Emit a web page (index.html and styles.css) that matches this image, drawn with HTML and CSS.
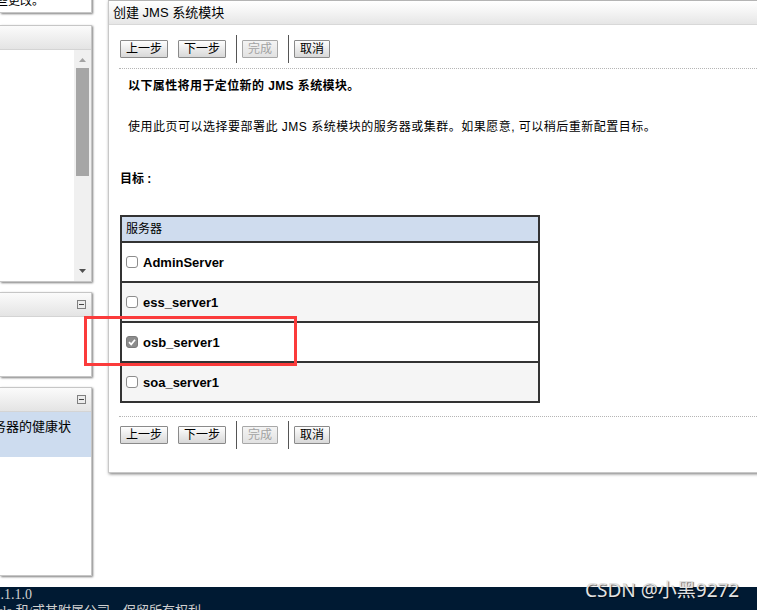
FILE: index.html
```html
<!DOCTYPE html>
<html lang="zh-CN">

<head>
  <meta charset="UTF-8">
  <meta name="viewport" content="width=device-width, initial-scale=1.0">
  <title>创建 JMS 系统模块</title>
  <link rel="stylesheet" href="styles.css">
</head>

<body>
  <div class="page">
    <!-- left column: console side panels -->
    <div class="sidebar">
      <div class="panel panel-change">
        <div class="clip-line clip-change"><span>要完成操作，请激活这些更改。</span></div>
      </div>

      <div class="panel panel-tree">
        <div class="panel-head"></div>
        <div class="panel-body tree-body">
          <div class="scrollbar">
            <svg class="sb-up" width="7" height="4" viewBox="0 0 7 4"><path d="M3.5 0 7 4H0z" fill="#a3a3a3"/></svg>
            <div class="sb-thumb"></div>
            <div class="sb-fill"></div>
            <svg class="sb-down" width="7" height="4" viewBox="0 0 7 4"><path d="M0 0h7L3.5 4z" fill="#505050"/></svg>
          </div>
        </div>
      </div>

      <div class="panel panel-tasks">
        <div class="panel-head">
          <svg class="toggle" width="9" height="9" viewBox="0 0 9 9"><rect x="0.5" y="0.5" width="8" height="8" fill="#ececec" stroke="#7f7f7f"/><path d="M2 4.5h5" stroke="#444" stroke-width="1"/></svg>
        </div>
        <div class="panel-body"></div>
      </div>

      <div class="panel panel-health">
        <div class="panel-head">
          <svg class="toggle" width="9" height="9" viewBox="0 0 9 9"><rect x="0.5" y="0.5" width="8" height="8" fill="#ececec" stroke="#7f7f7f"/><path d="M2 4.5h5" stroke="#444" stroke-width="1"/></svg>
        </div>
        <div class="panel-body">
          <div class="health-row">
            <div class="clip-line clip-health"><span>显示域中运行的所有服务器的健康状</span></div>
          </div>
        </div>
      </div>
    </div>

    <!-- main content: assistant step -->
    <div class="main">
      <div class="main-head">创建 JMS 系统模块</div>
      <div class="main-body">
        <div class="toolbar">
          <button class="btn">上一步</button>
          <button class="btn">下一步</button>
          <span class="sep"></span>
          <button class="btn" disabled>完成</button>
          <span class="sep"></span>
          <button class="btn">取消</button>
        </div>
        <div class="rule"></div>

        <p class="lead">以下属性将用于定位新的 JMS 系统模块。</p>
        <p class="hint">使用此页可以选择要部署此 JMS 系统模块的服务器或集群。如果愿意, 可以稍后重新配置目标。</p>
        <p class="target-label">目标 :</p>

        <table class="servers">
          <thead>
            <tr><th><div class="cell-head">服务器</div></th></tr>
          </thead>
          <tbody>
            <tr><td><label class="cell"><span class="box"></span>AdminServer</label></td></tr>
            <tr><td><label class="cell"><span class="box"></span>ess_server1</label></td></tr>
            <tr><td><label class="cell"><span class="box checked"><svg width="10" height="10" viewBox="0 0 10 10"><path d="M2 5.2 4.2 7.4 8 2.8" fill="none" stroke="#fff" stroke-width="1.7"/></svg></span>osb_server1</label></td></tr>
            <tr><td><label class="cell"><span class="box"></span>soa_server1</label></td></tr>
          </tbody>
        </table>

        <div class="rule rule-bottom"></div>
        <div class="toolbar toolbar-bottom">
          <button class="btn">上一步</button>
          <button class="btn">下一步</button>
          <span class="sep"></span>
          <button class="btn" disabled>完成</button>
          <span class="sep"></span>
          <button class="btn">取消</button>
        </div>
      </div>
    </div>
  </div>

  <div class="footer">
    <div class="clip-line clip-version"><span>WebLogic Server 版本: 12.2.1.1.0</span></div>
    <div class="clip-line clip-copy"><span>版权所有 (c) 1996,2016, Oracle 和/或其附属公司。保留所有权利。</span></div>
  </div>

  <div class="callout"></div>
  <div class="watermark">CSDN @小黑9272</div>
</body>

</html>
```

FILE: styles.css
```css
html,
body {
  margin: 0;
  overflow: hidden;
}

body {
  position: relative;
  width: 757px;
  height: 610px;
  font-family: "Liberation Sans", "Noto Sans CJK SC", sans-serif;
  font-size: 12px;
  color: #000;
  background-color: #fff;
}

p {
  margin: 0;
}

.page {
  display: flex;
  align-items: flex-start;
  height: 587px;
}

/* side panels */
.sidebar {
  flex: none;
  width: 92px;
  display: flex;
  flex-direction: column;
  gap: 10px;
}

.panel {
  box-sizing: border-box;
  background-color: #fff;
  border: 1px solid #c6c6c6;
  border-left: none;
  box-shadow: 1px 1px 2px #7d7d7d;
}

.panel-change {
  height: 30px;
  margin-top: -17px;
  margin-bottom: 2px;
  padding-top: 9px;
}

.panel-tree {
  height: 257px;
}

.panel-tasks {
  height: 85px;
}

.panel-health {
  height: 189px;
}

.panel-head {
  height: 23px;
  border-bottom: 1px solid #d4d4d4;
  background: linear-gradient(#fbfbfb, #e4e4e4);
  display: flex;
  justify-content: flex-end;
  align-items: center;
  padding-right: 5px;
}

.toggle {
  display: block;
}

.tree-body {
  height: 231px;
  display: flex;
  justify-content: flex-end;
}

.scrollbar {
  width: 17px;
  background-color: #f0f0f0;
  display: flex;
  flex-direction: column;
  align-items: center;
}

.sb-up {
  margin-top: 8px;
}

.sb-thumb {
  width: 13px;
  height: 108px;
  margin-top: 6px;
  background-color: #a6a6a6;
}

.sb-fill {
  flex: 1;
}

.sb-down {
  margin-bottom: 8px;
}

.health-row {
  height: 45px;
  padding-top: 6px;
  box-sizing: border-box;
  background-color: #cddcef;
  font-size: 13px;
}

/* text lines whose start runs off the left edge */
.clip-line {
  display: flex;
  justify-content: flex-end;
  white-space: nowrap;
  line-height: 16px;
}

.clip-change {
  width: 44px;
}

.clip-health {
  width: 71px;
  line-height: 18px;
}

/* main panel */
.main {
  flex: none;
  box-sizing: border-box;
  width: 670px;
  height: 473px;
  margin-left: 16px;
  background-color: #fff;
  border: 1px solid #c8c8c8;
  border-top-color: #b4b4b4;
  box-shadow: 1px 1px 3px #777;
}

.main-head {
  height: 23px;
  padding-left: 4px;
  border-bottom: 1px solid #d8d8d8;
  background: linear-gradient(#fff 0%, #f6f6f6 40%, #e6e6e6 100%);
  font-size: 13px;
  line-height: 23px;
}

.main-body {
  padding-left: 11px;
}

.toolbar {
  display: flex;
  align-items: center;
  height: 28px;
  margin-top: 10px;
}

.toolbar-bottom {
  margin-top: 4px;
}

.btn {
  box-sizing: border-box;
  height: 18px;
  padding: 0 5px;
  margin: 0;
  border: 1px solid #8a8a8a;
  border-radius: 1px;
  background: linear-gradient(#fefefe, #d8d8d8);
  font-family: "Liberation Sans", "Noto Sans CJK SC", sans-serif;
  font-size: 12px;
  line-height: 16px;
  color: #000;
}

.btn + .btn {
  margin-left: 10px;
}

.btn:disabled {
  color: #a3a3a3;
  border-color: #a8a8a8;
  background: linear-gradient(#f4f4f4, #e2e2e2);
}

.sep {
  width: 1px;
  height: 28px;
  margin: 0 5px 0 10px;
  background-color: #555;
}

.rule {
  margin: 5px 0 0 -1px;
  border-top: 1px dotted #b5b5b5;
}

.rule-bottom {
  margin-top: 13px;
}

.lead {
  margin: 8px 0 0 8px;
  font-weight: bold;
  line-height: 18px;
  letter-spacing: 0.4px;
}

.hint {
  margin: 23px 0 0 8px;
  line-height: 18px;
  letter-spacing: 0.5px;
}

.target-label {
  margin-top: 34px;
  font-weight: bold;
  line-height: 18px;
}

/* target servers table */
.servers {
  width: 420px;
  margin-top: 27px;
  border-collapse: separate;
  border-spacing: 0;
  border: 1px solid #333;
}

.servers th,
.servers td {
  padding: 0;
  border: 1px solid #333;
  text-align: left;
}

.servers th {
  background-color: #cfdcee;
  font-weight: normal;
}

.servers tbody tr:nth-child(even) td {
  background-color: #f5f5f5;
}

.cell-head {
  height: 24px;
  padding-left: 4px;
  line-height: 24px;
}

.cell {
  display: flex;
  align-items: center;
  gap: 5px;
  height: 38px;
  padding-left: 4px;
  font-size: 13px;
  font-weight: bold;
}

.box {
  box-sizing: border-box;
  width: 12px;
  height: 12px;
  border: 1px solid #8d8d8d;
  border-radius: 3px;
  background-color: #fff;
  display: flex;
  align-items: center;
  justify-content: center;
}

.box.checked {
  border-color: #7b7b7b;
  background-color: #8c8c8c;
}

/* footer bar */
.footer {
  height: 23px;
  overflow: hidden;
  background-color: #001a33;
  color: #d0d0d0;
  font-family: "Liberation Serif", "Noto Sans CJK SC", serif;
  font-size: 14px;
}

.clip-version {
  width: 32px;
}

.clip-copy {
  width: 214px;
  font-size: 13px;
}

/* overlays */
.callout {
  position: absolute;
  left: 84px;
  top: 316px;
  width: 213px;
  height: 50px;
  box-sizing: border-box;
  border: 3px solid #fb3b3b;
}

.watermark {
  position: absolute;
  left: 585px;
  top: 578px;
  font-family: "Noto Sans", "Noto Sans CJK SC", sans-serif;
  font-size: 19px;
  line-height: 24px;
  color: #e2e2e2;
  text-shadow: 1px 1px 1px rgba(0, 0, 0, 0.6);
  white-space: nowrap;
}
```
